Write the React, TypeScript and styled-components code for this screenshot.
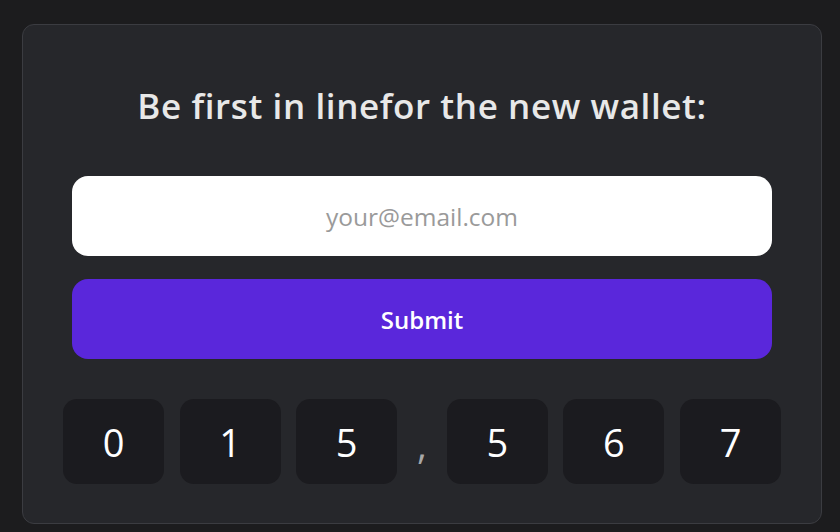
import React from "react";
import styled, { createGlobalStyle } from "styled-components";

const Global = createGlobalStyle`
  html, body { margin: 0; padding: 0; background: #1c1c1e; }
  body { font-family: "Open Sans", "Noto Sans", sans-serif; }
  * { box-sizing: border-box; }
`;

const Page = styled.div`
  padding: 24px 0 0 22px;
  min-height: 532px;
`;

const Card = styled.section`
  width: 800px;
  height: 500px;
  background: #26272b;
  border: 1px solid #3b3c41;
  border-radius: 12px;
  padding: 61px 49px 0;
  display: flex;
  flex-direction: column;
  align-items: stretch;
`;

const Title = styled.h1`
  margin: 0 0 50px;
  font-size: 35px;
  line-height: 40px;
  font-weight: 600;
  color: #e8e8e8;
  text-align: center;
  letter-spacing: 0.6px;
`;

const EmailInput = styled.input`
  height: 80px;
  border: none;
  border-radius: 16px;
  background: #ffffff;
  font-family: inherit;
  font-size: 24.5px;
  text-align: center;
  color: #222;
  outline: none;
  &::placeholder { color: #9a9a9a; }
`;

const SubmitButton = styled.button`
  margin-top: 23px;
  height: 80px;
  border: none;
  border-radius: 16px;
  background: #5a27db;
  color: #ffffff;
  font-family: inherit;
  font-size: 24px;
  font-weight: 600;
  cursor: pointer;
`;

const Counter = styled.div`
  margin: 40px -9px 0;
  display: flex;
  justify-content: center;
  gap: 15.5px;
`;

const Digit = styled.div`
  width: 101.5px;
  height: 85px;
  border-radius: 14px;
  background: #1b1b1f;
  color: #ffffff;
  font-size: 38px;
  font-weight: 400;
  display: flex;
  align-items: center;
  justify-content: center;
  line-height: 1;
`;

const Separator = styled.div`
  width: 19px;
  display: flex;
  align-items: center;
  justify-content: center;
  color: #a8a8a8;
  font-size: 38px;
  line-height: 1;
  padding-top: 4px;
`;

const digits = ["0", "1", "5", ",", "5", "6", "7"];

export default function App() {
  return (
    <>
      <Global />
      <Page>
        <Card>
          <Title>Be first in linefor the new wallet:</Title>
          <EmailInput type="email" placeholder="your@email.com" />
          <SubmitButton type="button">Submit</SubmitButton>
          <Counter>
            {digits.map((d, i) =>
              d === "," ? (
                <Separator key={i}>,</Separator>
              ) : (
                <Digit key={i}>{d}</Digit>
              )
            )}
          </Counter>
        </Card>
      </Page>
    </>
  );
}
